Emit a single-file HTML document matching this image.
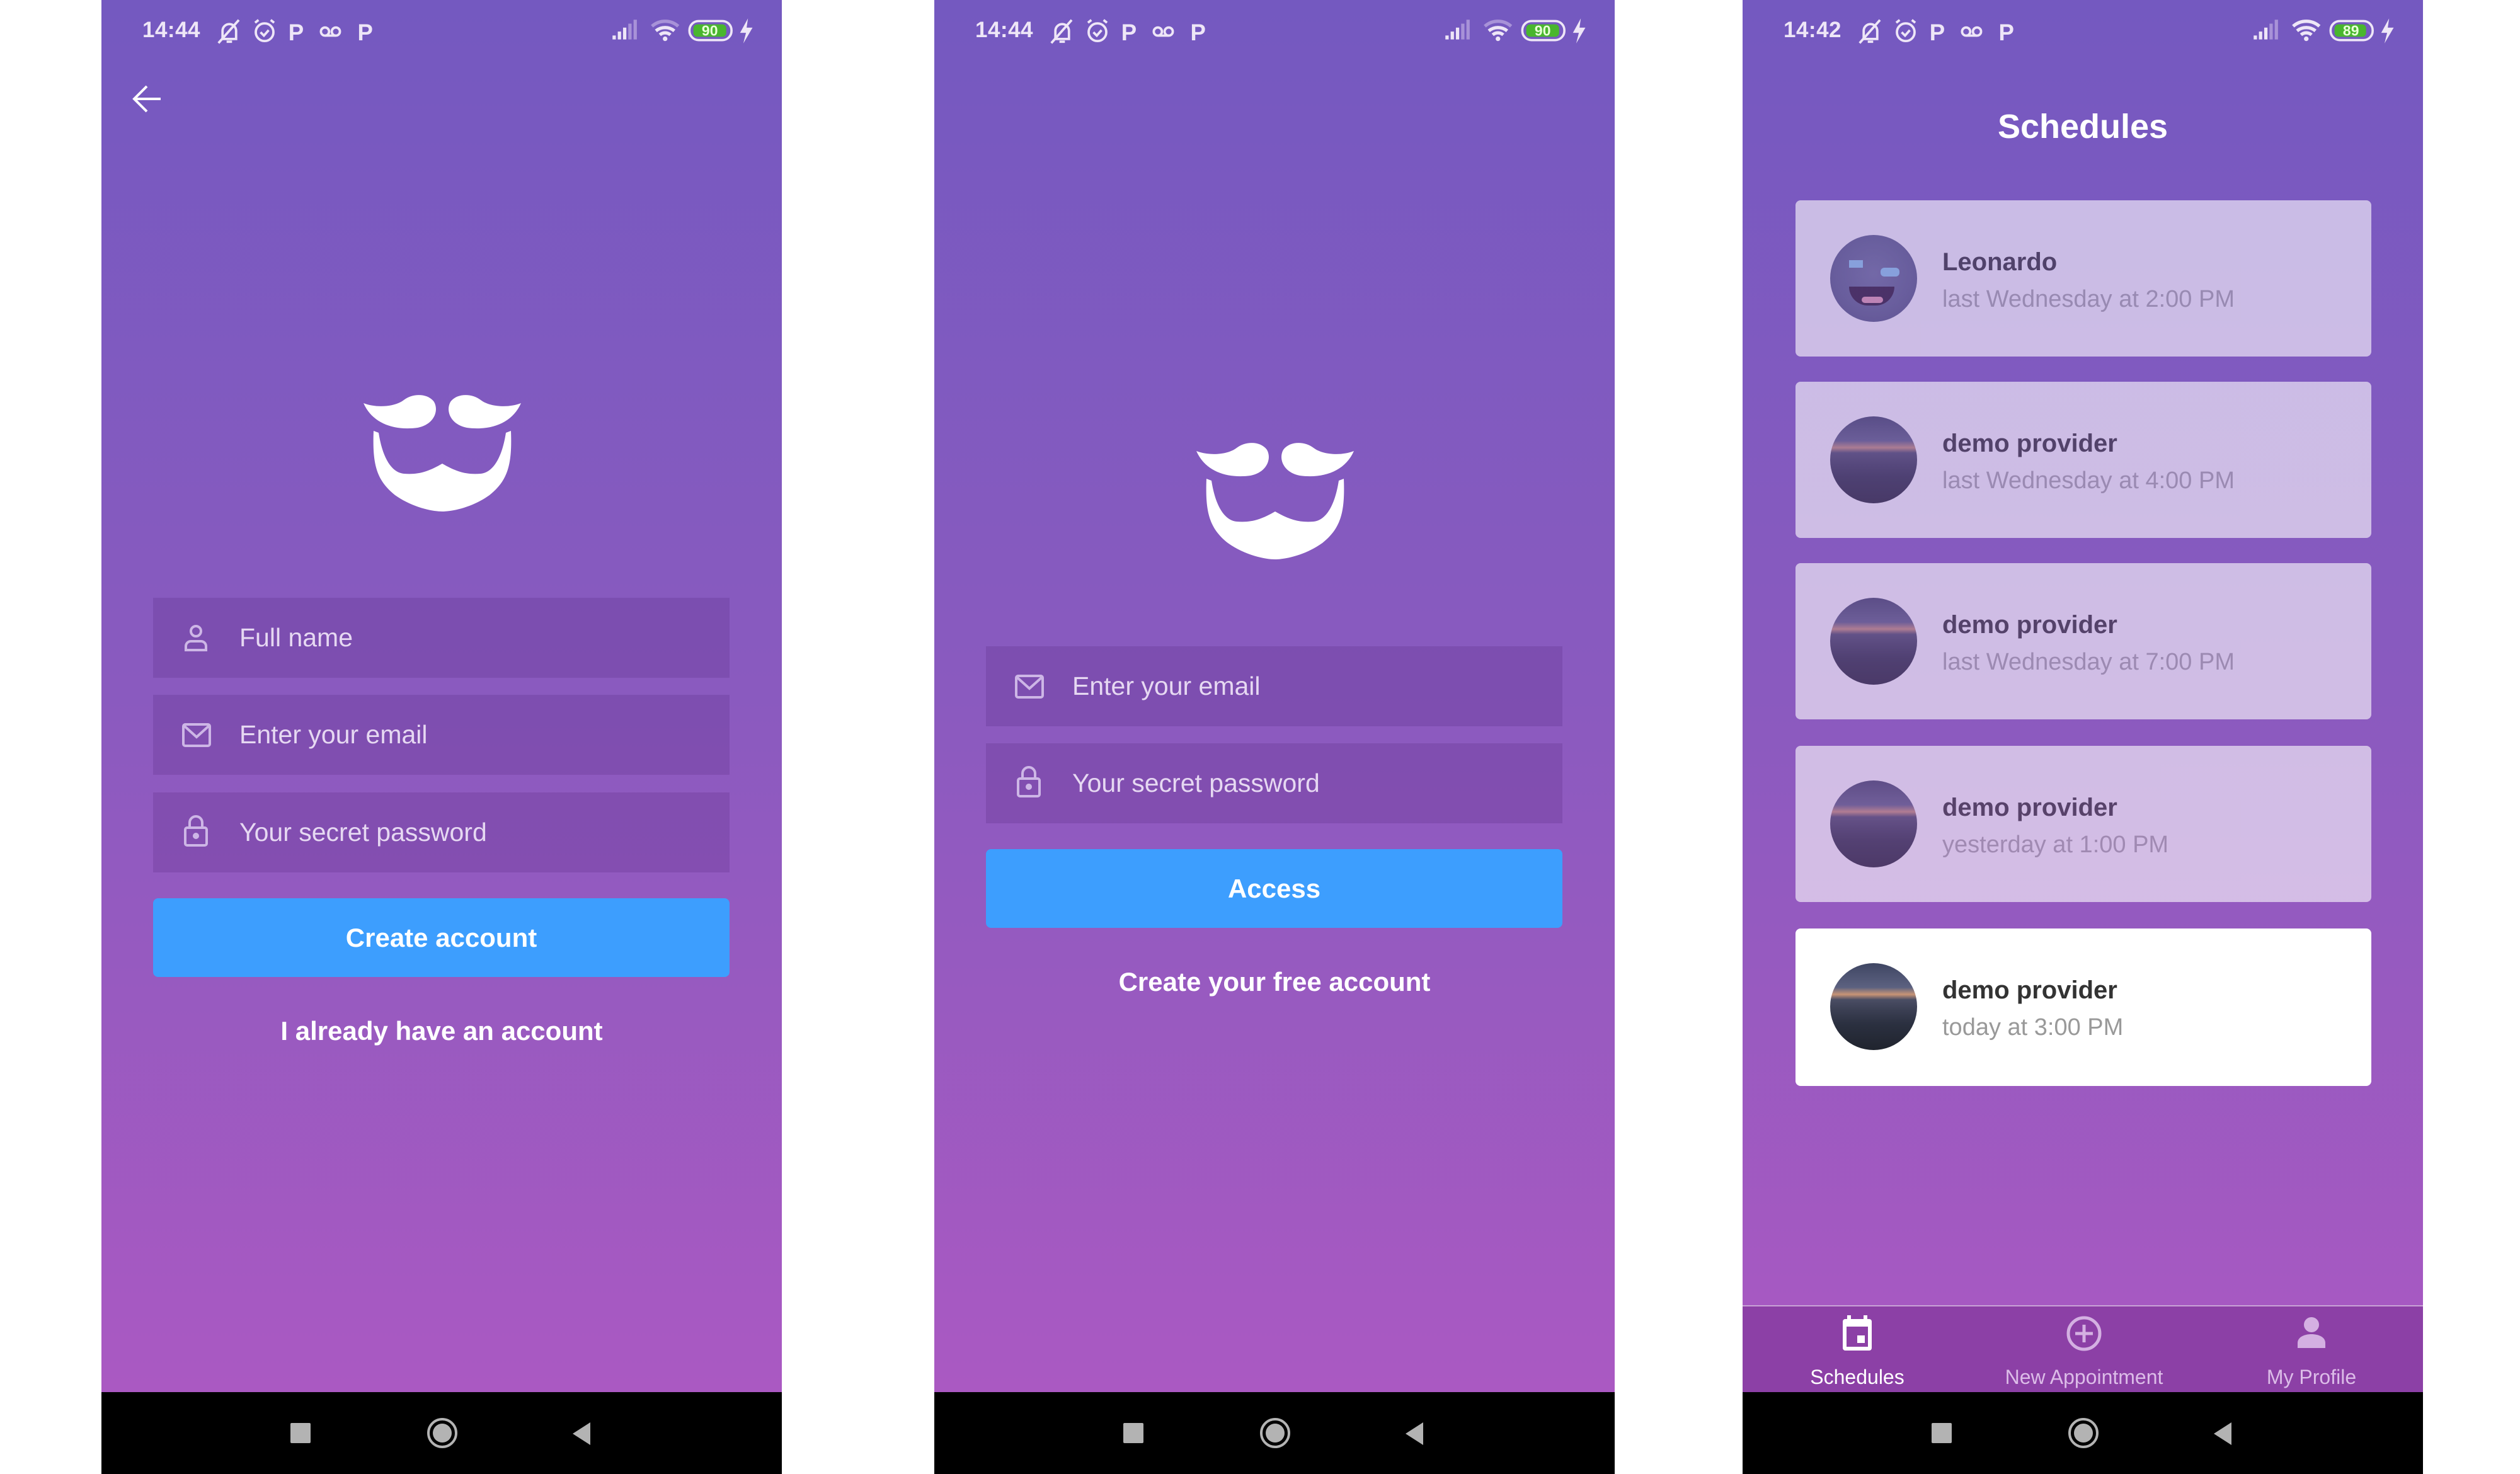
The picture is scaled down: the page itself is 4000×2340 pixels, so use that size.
<!DOCTYPE html>
<html><head><meta charset="utf-8">
<style>
*{margin:0;padding:0;box-sizing:border-box}
html,body{width:4000px;height:2340px;background:#fff;overflow:hidden;font-family:"Liberation Sans",sans-serif}
.ph{position:absolute;top:0;width:1080px;height:2340px;background:linear-gradient(180deg,#7459c0 0px,#8a5abf 1100px,#aa59c2 2210px);overflow:hidden}
.nav{position:absolute;left:0;top:2210px;width:1080px;height:130px;background:#000}
.abs{position:absolute}
.time{position:absolute;left:65px;top:28px;font-size:35px;font-weight:bold;color:#eee6f7;letter-spacing:0.5px}
.inp{position:absolute;left:82px;width:915px;height:127px;background:rgba(60,20,100,0.16)}
.inp span{position:absolute;left:137px;top:0;line-height:127px;font-size:41px;color:#e6d8f2}
.inp svg{position:absolute;left:46px;top:41px}
.btn{position:absolute;left:82px;width:915px;height:125px;background:#3d9efe;border-radius:8px;color:#fff;font-weight:bold;font-size:42px;text-align:center;line-height:125px}
.lnk{position:absolute;left:0;width:1080px;text-align:center;color:#fff;font-weight:bold;font-size:42px}
.card{position:absolute;left:84px;width:914px;height:248px;border-radius:8px;background:#fff}
.card.f{opacity:.6}
.card.f .dt{color:#aaa}
.av{position:absolute;left:55px;top:55px;width:138px;height:138px;border-radius:50%;overflow:hidden}
.nm{position:absolute;left:233px;top:76px;font-size:40px;font-weight:bold;color:#333}
.dt{position:absolute;left:233px;top:136px;font-size:38px;color:#999}
.city{background:linear-gradient(180deg,#3f4663 0%,#5c6180 28%,#c89476 36%,#4a4d64 42%,#3a3e52 55%,#2b3040 70%,#20242e 100%)}
.tab{position:absolute;top:2072px;left:0;width:1080px;height:138px;background:#8c40a6;border-top:2px solid #c9a3d6}
.tl{position:absolute;top:94px;width:360px;text-align:center;font-size:32px}
</style></head><body>

<!-- ===== PHONE 1 ===== -->
<div class="ph" style="left:161px">
  <div class="time">14:44</div>
  <svg class="abs" style="left:175px;top:24px" width="280" height="50" viewBox="0 0 260 44" fill="none" stroke="#eee6f7" stroke-width="3.5">
    <path d="M16 34 V22 a10 10 0 0 1 20 0 V34 Z M22 38 h8 M10 40 L40 6"/>
    <circle cx="78" cy="24" r="13"/><path d="M72 24 l5 5 7 -8 M64 10 l5 -4 M92 10 l-5 -4"/>
    <text x="113" y="36" font-family="Liberation Sans" font-weight="bold" font-size="34" fill="#eee6f7" stroke="none">P</text>
    <circle cx="167" cy="23" r="6"/><circle cx="183" cy="23" r="6"/><path d="M167 29 h16"/>
    <text x="215" y="36" font-family="Liberation Sans" font-weight="bold" font-size="34" fill="#eee6f7" stroke="none">P</text>
  </svg>
  <svg class="abs" style="left:805px;top:20px" width="240" height="56" viewBox="0 0 230 52">
    <g fill="#eee6f7"><rect x="6" y="34" width="5" height="6"/><rect x="14" y="28" width="5" height="12"/><rect x="22" y="22" width="5" height="18"/></g>
    <g fill="#a892d8"><rect x="30" y="16" width="5" height="24"/><rect x="38" y="10" width="5" height="30"/></g>
    <path d="M66 20 a30 30 0 0 1 40 0" stroke="#a892d8" stroke-width="5" fill="none"/>
    <path d="M72 27 a22 22 0 0 1 28 0 M78 33 a12 12 0 0 1 16 0" stroke="#eee6f7" stroke-width="5" fill="none"/>
    <circle cx="86" cy="39" r="3.5" fill="#eee6f7"/>
    <rect x="123" y="12" width="64" height="29" rx="14" fill="none" stroke="#eee6f7" stroke-width="3.5"/>
    <rect x="129" y="17" width="50" height="19" rx="6" fill="#49b62e"/>
    <text x="154" y="34" text-anchor="middle" font-family="Liberation Sans" font-size="22" font-weight="bold" fill="#e8ffd8">90</text>
    <path d="M212 8 L200 30 h9 l-4 16 14 -24 h-9 z" fill="#eee6f7"/>
  </svg>
  <svg class="abs" style="left:48px;top:134px" width="48" height="46" viewBox="0 0 48 46" fill="none" stroke="#fff" stroke-width="4"><path d="M46 23 H4 M24 3 L4 23 L24 43"/></svg>
  <svg class="abs" style="left:416px;top:626px" width="250" height="186" viewBox="0 0 250 186" fill="#fff">
    <path d="M0 14 C20 22 50 20 64 9 C78 -2 102 -2 112 12 C120 26 112 48 86 53 C48 58 14 46 0 14 Z"/>
    <path d="M250 14 C230 22 200 20 186 9 C172 -2 148 -2 138 12 C130 26 138 48 164 53 C202 58 236 46 250 14 Z"/>
    <path d="M16 58 L24 61 C30 100 44 124 64 126 C88 128 104 122 125 110 C146 122 162 128 186 126 C206 124 220 100 226 61 L234 58 C236 110 230 136 200 160 C172 180 140 186 125 186 C110 186 78 180 50 160 C20 136 14 110 16 58 Z"/>
  </svg>
  <div class="inp" style="top:949px"><svg width="44" height="44" viewBox="0 0 44 44" fill="none" stroke="#cdb6e6" stroke-width="4"><circle cx="22" cy="12" r="8"/><path d="M6 42 V36 a8 8 0 0 1 8 -8 h16 a8 8 0 0 1 8 8 V42 Z"/></svg><span>Full name</span></div>
  <div class="inp" style="top:1103px"><svg width="46" height="44" viewBox="0 0 46 44" fill="none" stroke="#cdb6e6" stroke-width="4"><rect x="2" y="6" width="42" height="34" rx="3"/><path d="M3 8 L23 26 L43 8"/></svg><span>Enter your email</span></div>
  <div class="inp" style="top:1258px"><svg width="44" height="50" viewBox="0 0 44 50" fill="none" stroke="#cdb6e6" stroke-width="4" style="top:36px"><rect x="5" y="20" width="34" height="28" rx="3"/><path d="M12 20 V12 a10 10 0 0 1 20 0 V20"/><circle cx="22" cy="33" r="3" fill="#cdb6e6"/></svg><span>Your secret password</span></div>
  <div class="btn" style="top:1426px">Create account</div>
  <div class="lnk" style="top:1613px">I already have an account</div>
  <div class="nav">
    <div class="abs" style="left:300px;top:49px;width:32px;height:32px;background:#b3b3b3;border-radius:2px"></div>
    <div class="abs" style="left:517px;top:41px;width:48px;height:48px;border:4px solid #b3b3b3;border-radius:50%"><div style="margin:5px;width:30px;height:30px;border-radius:50%;background:#b3b3b3"></div></div>
    <svg class="abs" style="left:746px;top:47px" width="32" height="38" viewBox="0 0 32 38"><path d="M30 1 V37 L2 19 Z" fill="#b3b3b3"/></svg>
  </div>
</div>

<!-- ===== PHONE 2 ===== -->
<div class="ph" style="left:1483px">
  <div class="time">14:44</div>
  <svg class="abs" style="left:175px;top:24px" width="280" height="50" viewBox="0 0 260 44" fill="none" stroke="#eee6f7" stroke-width="3.5">
    <path d="M16 34 V22 a10 10 0 0 1 20 0 V34 Z M22 38 h8 M10 40 L40 6"/>
    <circle cx="78" cy="24" r="13"/><path d="M72 24 l5 5 7 -8 M64 10 l5 -4 M92 10 l-5 -4"/>
    <text x="113" y="36" font-family="Liberation Sans" font-weight="bold" font-size="34" fill="#eee6f7" stroke="none">P</text>
    <circle cx="167" cy="23" r="6"/><circle cx="183" cy="23" r="6"/><path d="M167 29 h16"/>
    <text x="215" y="36" font-family="Liberation Sans" font-weight="bold" font-size="34" fill="#eee6f7" stroke="none">P</text>
  </svg>
  <svg class="abs" style="left:805px;top:20px" width="240" height="56" viewBox="0 0 230 52">
    <g fill="#eee6f7"><rect x="6" y="34" width="5" height="6"/><rect x="14" y="28" width="5" height="12"/><rect x="22" y="22" width="5" height="18"/></g>
    <g fill="#a892d8"><rect x="30" y="16" width="5" height="24"/><rect x="38" y="10" width="5" height="30"/></g>
    <path d="M66 20 a30 30 0 0 1 40 0" stroke="#a892d8" stroke-width="5" fill="none"/>
    <path d="M72 27 a22 22 0 0 1 28 0 M78 33 a12 12 0 0 1 16 0" stroke="#eee6f7" stroke-width="5" fill="none"/>
    <circle cx="86" cy="39" r="3.5" fill="#eee6f7"/>
    <rect x="123" y="12" width="64" height="29" rx="14" fill="none" stroke="#eee6f7" stroke-width="3.5"/>
    <rect x="129" y="17" width="50" height="19" rx="6" fill="#49b62e"/>
    <text x="154" y="34" text-anchor="middle" font-family="Liberation Sans" font-size="22" font-weight="bold" fill="#e8ffd8">90</text>
    <path d="M212 8 L200 30 h9 l-4 16 14 -24 h-9 z" fill="#eee6f7"/>
  </svg>
  <svg class="abs" style="left:416px;top:702px" width="250" height="186" viewBox="0 0 250 186" fill="#fff">
    <path d="M0 14 C20 22 50 20 64 9 C78 -2 102 -2 112 12 C120 26 112 48 86 53 C48 58 14 46 0 14 Z"/>
    <path d="M250 14 C230 22 200 20 186 9 C172 -2 148 -2 138 12 C130 26 138 48 164 53 C202 58 236 46 250 14 Z"/>
    <path d="M16 58 L24 61 C30 100 44 124 64 126 C88 128 104 122 125 110 C146 122 162 128 186 126 C206 124 220 100 226 61 L234 58 C236 110 230 136 200 160 C172 180 140 186 125 186 C110 186 78 180 50 160 C20 136 14 110 16 58 Z"/>
  </svg>
  <div class="inp" style="top:1026px"><svg width="46" height="44" viewBox="0 0 46 44" fill="none" stroke="#cdb6e6" stroke-width="4"><rect x="2" y="6" width="42" height="34" rx="3"/><path d="M3 8 L23 26 L43 8"/></svg><span>Enter your email</span></div>
  <div class="inp" style="top:1180px"><svg width="44" height="50" viewBox="0 0 44 50" fill="none" stroke="#cdb6e6" stroke-width="4" style="top:36px"><rect x="5" y="20" width="34" height="28" rx="3"/><path d="M12 20 V12 a10 10 0 0 1 20 0 V20"/><circle cx="22" cy="33" r="3" fill="#cdb6e6"/></svg><span>Your secret password</span></div>
  <div class="btn" style="top:1348px">Access</div>
  <div class="lnk" style="top:1535px">Create your free account</div>
  <div class="nav">
    <div class="abs" style="left:300px;top:49px;width:32px;height:32px;background:#b3b3b3;border-radius:2px"></div>
    <div class="abs" style="left:517px;top:41px;width:48px;height:48px;border:4px solid #b3b3b3;border-radius:50%"><div style="margin:5px;width:30px;height:30px;border-radius:50%;background:#b3b3b3"></div></div>
    <svg class="abs" style="left:746px;top:47px" width="32" height="38" viewBox="0 0 32 38"><path d="M30 1 V37 L2 19 Z" fill="#b3b3b3"/></svg>
  </div>
</div>

<!-- ===== PHONE 3 ===== -->
<div class="ph" style="left:2766px">
  <div class="time">14:42</div>
  <svg class="abs" style="left:175px;top:24px" width="280" height="50" viewBox="0 0 260 44" fill="none" stroke="#eee6f7" stroke-width="3.5">
    <path d="M16 34 V22 a10 10 0 0 1 20 0 V34 Z M22 38 h8 M10 40 L40 6"/>
    <circle cx="78" cy="24" r="13"/><path d="M72 24 l5 5 7 -8 M64 10 l5 -4 M92 10 l-5 -4"/>
    <text x="113" y="36" font-family="Liberation Sans" font-weight="bold" font-size="34" fill="#eee6f7" stroke="none">P</text>
    <circle cx="167" cy="23" r="6"/><circle cx="183" cy="23" r="6"/><path d="M167 29 h16"/>
    <text x="215" y="36" font-family="Liberation Sans" font-weight="bold" font-size="34" fill="#eee6f7" stroke="none">P</text>
  </svg>
  <svg class="abs" style="left:805px;top:20px" width="240" height="56" viewBox="0 0 230 52">
    <g fill="#eee6f7"><rect x="6" y="34" width="5" height="6"/><rect x="14" y="28" width="5" height="12"/><rect x="22" y="22" width="5" height="18"/></g>
    <g fill="#a892d8"><rect x="30" y="16" width="5" height="24"/><rect x="38" y="10" width="5" height="30"/></g>
    <path d="M66 20 a30 30 0 0 1 40 0 M72 27 a22 22 0 0 1 28 0 M78 33 a12 12 0 0 1 16 0" stroke="#eee6f7" stroke-width="5" fill="none"/>
    <circle cx="86" cy="39" r="3.5" fill="#eee6f7"/>
    <rect x="123" y="12" width="64" height="29" rx="14" fill="none" stroke="#eee6f7" stroke-width="3.5"/>
    <rect x="129" y="17" width="48" height="19" rx="6" fill="#49b62e"/>
    <text x="154" y="34" text-anchor="middle" font-family="Liberation Sans" font-size="22" font-weight="bold" fill="#e8ffd8">89</text>
    <path d="M212 8 L200 30 h9 l-4 16 14 -24 h-9 z" fill="#eee6f7"/>
  </svg>
  <div class="abs" style="left:0;top:170px;width:1080px;text-align:center;color:#fff;font-weight:bold;font-size:54px">Schedules</div>

  <div class="card f" style="top:318px"><div class="av" style="background:radial-gradient(circle at 50% 45%,#6d7398 0%,#5b6086 60%,#4a4f72 100%)">
    <div class="abs" style="left:30px;top:40px;width:22px;height:12px;background:#8fd0f0"></div>
    <div class="abs" style="left:80px;top:52px;width:30px;height:14px;background:#8fd0f0;border-radius:6px"></div>
    <div class="abs" style="left:30px;top:82px;width:72px;height:30px;background:#2a1830;border-radius:0 0 36px 36px"></div>
    <div class="abs" style="left:50px;top:98px;width:34px;height:10px;background:#e8a0b0;border-radius:6px"></div>
  </div><div class="nm">Leonardo</div><div class="dt">last Wednesday at 2:00 PM</div></div>
  <div class="card f" style="top:606px"><div class="av city"></div><div class="nm">demo provider</div><div class="dt">last Wednesday at 4:00 PM</div></div>
  <div class="card f" style="top:894px"><div class="av city"></div><div class="nm">demo provider</div><div class="dt">last Wednesday at 7:00 PM</div></div>
  <div class="card f" style="top:1184px"><div class="av city"></div><div class="nm">demo provider</div><div class="dt">yesterday at 1:00 PM</div></div>
  <div class="card" style="top:1474px;height:250px"><div class="av city"></div><div class="nm">demo provider</div><div class="dt">today at 3:00 PM</div></div>

  <div class="tab">
    <svg class="abs" style="left:156px;top:12px" width="52" height="60" viewBox="0 0 52 60"><rect x="10" y="2" width="6" height="10" fill="#fff"/><rect x="36" y="2" width="6" height="10" fill="#fff"/><rect x="3" y="8" width="46" height="50" rx="4" fill="#fff"/><rect x="9" y="20" width="34" height="32" fill="#8c40a6"/><rect x="26" y="34" width="12" height="12" fill="#fff"/></svg>
    <svg class="abs" style="left:513px;top:14px" width="58" height="58" viewBox="0 0 58 58" fill="none" stroke="#d4b0e2" stroke-width="5"><circle cx="29" cy="29" r="25"/><path d="M29 15 V43 M15 29 H43"/></svg>
    <svg class="abs" style="left:879px;top:16px" width="48" height="50" viewBox="0 0 48 50" fill="#d4b0e2"><circle cx="24" cy="13" r="12"/><path d="M2 50 V42 C2 32 14 28 24 28 C34 28 46 32 46 42 V50 Z"/></svg>
    <div class="tl" style="left:2px;color:#fff">Schedules</div>
    <div class="tl" style="left:362px;color:#dcbce8">New Appointment</div>
    <div class="tl" style="left:723px;color:#dcbce8">My Profile</div>
  </div>
  <div class="nav">
    <div class="abs" style="left:300px;top:49px;width:32px;height:32px;background:#b3b3b3;border-radius:2px"></div>
    <div class="abs" style="left:517px;top:41px;width:48px;height:48px;border:4px solid #b3b3b3;border-radius:50%"><div style="margin:5px;width:30px;height:30px;border-radius:50%;background:#b3b3b3"></div></div>
    <svg class="abs" style="left:746px;top:47px" width="32" height="38" viewBox="0 0 32 38"><path d="M30 1 V37 L2 19 Z" fill="#b3b3b3"/></svg>
  </div>
</div>
</body></html>
